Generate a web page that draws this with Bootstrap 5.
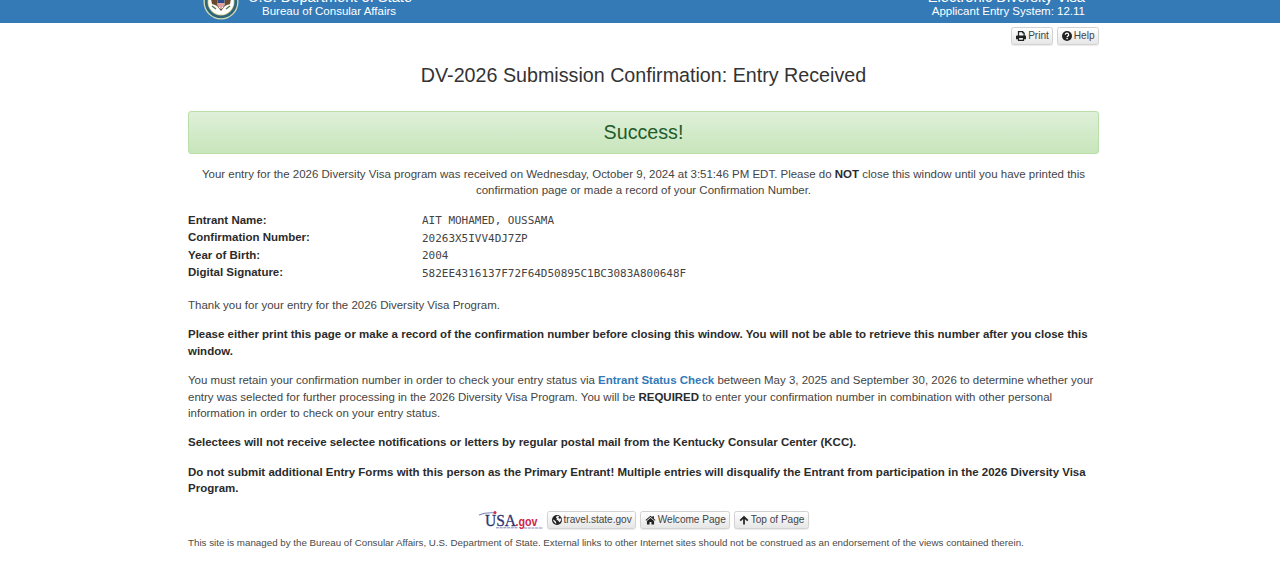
<!DOCTYPE html>
<html lang="en">
<head>
<meta charset="utf-8">
<meta name="viewport" content="width=device-width, initial-scale=1">
<title>DV-2026 Submission Confirmation</title>
<link href="https://cdn.jsdelivr.net/npm/bootstrap@5.3.0/dist/css/bootstrap.min.css" rel="stylesheet">
<style>
body{font-family:"Liberation Sans",Arial,sans-serif;font-size:11.49px;line-height:16.4px;color:#444;background:#fff;overflow:hidden}
b,dt{color:#2b2b2b}
.page{width:911px;margin-left:188px}
.masthead{height:23px;background:#337ab7;color:#fff;overflow:hidden}
.masthead .page{height:23px;padding:0 14px 0 15px}
.seal{width:36px;height:36px;margin-top:-16.5px}
.agency{margin:-11px 0 0 9px}
.system{margin-top:-11px}
.masthead .big{font-size:14.7px;line-height:16px;white-space:nowrap}
.masthead .sub{font-size:11.5px;line-height:13px}
.agency .sub{padding-left:14px}
.btn-tool{--bs-btn-font-size:10.1px;--bs-btn-line-height:16px;--bs-btn-border-radius:2.5px;--bs-btn-border-color:#d2d2d2;--bs-btn-color:#444;height:18px;background:linear-gradient(#fff,#e6e6e6);display:inline-flex;align-items:center;white-space:nowrap;box-shadow:0 1px 1px rgba(0,0,0,.08)}
.btn-tool svg{width:10px;height:10px;fill:#222;flex:none}
h1{font-size:19.7px;line-height:24px;font-weight:400;color:#333;margin:18px 0 23.500px}
.banner{height:43px;border:1px solid #b9dfa8;border-radius:3px;background:linear-gradient(#dff0d8,#c8e5bc);font-size:19.7px;line-height:41px;color:#1f5c2c;margin:0 0 12.500px;padding:0}
p{margin:0 0 13px;white-space:nowrap}
dl{display:grid;grid-template-columns:234px 1fr;line-height:17.4px;margin:0 0 15.5px}
dd{margin:0;font:10.97px/17.4px "DejaVu Sans Mono",monospace;padding-top:.5px;height:17.4px}
a.status{color:#337ab7;font-weight:700;text-decoration:none}
.tools{gap:3.5px}
.tools .btn-tool{padding:0 3.5px 0 4px;gap:2px;letter-spacing:-.02px}
.note{font-size:9.77px;line-height:14px;color:#4a4a4a;margin-top:6px}
</style>
</head>
<body>
<header class="masthead">
  <div class="page d-flex justify-content-between align-items-start">
    <div class="d-flex">
      <svg class="seal" viewBox="0 0 36 36">
        <circle cx="18" cy="18" r="17.5" fill="#d9dcb8"/><circle cx="18" cy="18" r="16.2" fill="#2d6678"/>
        <circle cx="18" cy="18" r="13.4" fill="#d8c98a"/><circle cx="18" cy="18" r="12.6" fill="#fff"/>
        <path d="M8 15q1-4 5-4l3 3q2-4 4 0l3-3q4 0 5 4l-1 5-3 1-2 1-4 5-4-5-2-1-3-1z" fill="#6b4a2c"/>
        <path d="M14.500 16h7v5q-1 3-3.500 4-2.500-1-3.500-4z" fill="#fff"/><path d="M14.500 16h7v3h-7z" fill="#284b8c"/>
        <path d="M16 19v4M18 19v5.500M20 19v4" stroke="#c64545" stroke-width="1"/>
        <path d="M9 22l4 3M27 22l-4 3" stroke="#567b4a" stroke-width="1.500"/>
      </svg>
      <div class="agency"><div class="big">U.S. Department of State</div><div class="sub">Bureau of Consular Affairs</div></div>
    </div>
    <div class="system text-end"><div class="big">Electronic Diversity Visa</div><div class="sub">Applicant Entry System: 12.11</div></div>
  </div>
</header>
<main class="page">
  <div class="d-flex justify-content-end tools" style="padding-top:4px">
    <button class="btn btn-tool" type="button"><svg viewBox="0 0 16 16"><path fill-rule="evenodd" d="M3 0h8l3 3v4h1l1 1v5h-3v3H3v-3H0V8l1-1h2zm2 2v5h7V4h-2V2zm0 9v3h6v-3z"/></svg>Print</button>
    <button class="btn btn-tool" type="button"><svg viewBox="0 0 16 16"><circle cx="8" cy="8" r="8"/><path d="M5.200 6Q5.500 3.500 8 3.500T10.700 6C10.700 8 8.200 7.800 8.200 10" fill="none" stroke="#fff" stroke-width="2"/><path d="M7.100 11h2.200v2.200H7.100z" fill="#fff"/></svg>Help</button>
  </div>
  <h1 class="text-center">DV-2026 Submission Confirmation: Entry Received</h1>
  <div class="alert banner text-center">Success!</div>
  <p class="text-center">Your entry for the 2026 Diversity Visa program was received on Wednesday, October 9, 2024 at 3:51:46 PM EDT. Please do <b>NOT</b> close this window until you have printed this<br>confirmation page or made a record of your Confirmation Number.</p>
  <dl>
    <dt>Entrant Name:</dt><dd>AIT MOHAMED, OUSSAMA</dd>
    <dt>Confirmation Number:</dt><dd>20263X5IVV4DJ7ZP</dd>
    <dt>Year of Birth:</dt><dd>2004</dd>
    <dt>Digital Signature:</dt><dd>582EE4316137F72F64D50895C1BC3083A800648F</dd>
  </dl>
  <p>Thank you for your entry for the 2026 Diversity Visa Program.</p>
  <p><b>Please either print this page or make a record of the confirmation number before closing this window. You will not be able to retrieve this number after you close this<br>window.</b></p>
  <p>You must retain your confirmation number in order to check your entry status via <a class="status" href="#">Entrant Status Check</a> between May 3, 2025 and September 30, 2026 to determine whether your<br>entry was selected for further processing in the 2026 Diversity Visa Program. You will be <b>REQUIRED</b> to enter your confirmation number in combination with other personal<br>information in order to check on your entry status.</p>
  <p><b>Selectees will not receive selectee notifications or letters by regular postal mail from the Kentucky Consular Center (KCC).</b></p>
  <p><b>Do not submit additional Entry Forms with this person as the Primary Entrant! Multiple entries will disqualify the Entrant from participation in the 2026 Diversity Visa<br>Program.</b></p>
  <div class="d-flex justify-content-center align-items-center tools">
    <svg width="65" height="20" viewBox="0 0 65 20">
      <path d="M1 5Q8 2 18 3" fill="none" stroke="#7785b8" stroke-width="1.200"/>
      <text x="7" y="16" font-family="Liberation Serif,serif" font-size="16" fill="#2d3472" stroke="#2d3472" stroke-width=".3" textLength="31" lengthAdjust="spacingAndGlyphs">USA</text>
      <text x="37.500" y="16" font-family="Liberation Sans,sans-serif" font-size="12.500" font-weight="700" fill="#cf2449" textLength="22" lengthAdjust="spacingAndGlyphs">.gov</text>
      <circle cx="17" cy="2.500" r="1.500" fill="#d22b49"/>
      <path d="M18 17.800H40M46 18H65" stroke="#8388b4" stroke-width="1" stroke-dasharray="3 .7"/>
    </svg>
    <a class="btn btn-tool" href="#"><svg viewBox="0 0 16 16"><circle cx="8" cy="8" r="8"/><path d="M8 1l4 1-2 2 2 2 2-1 1 3-3 4-2-3-3-2 1-2-2-1zM2 7l4 3 1 4-2-1-3-4z" fill="#eee"/></svg>travel.state.gov</a>
    <a class="btn btn-tool" href="#"><svg viewBox="0 0 16 16" style="width:11px"><path d="M8 1l3 2.600V2h2.500v3.800L16 8l-1 1.200-7-6-7 6L0 8z"/><path d="M8 4.700l5.700 4.800V15H9.500v-4h-3v4H2.300V9.500z"/></svg>Welcome Page</a>
    <a class="btn btn-tool" href="#"><svg viewBox="0 0 16 16"><path d="M8 1l7 7-2 2-3.600-3.600V15H6.600V6.400L3 10 1 8z"/></svg>Top of Page</a>
  </div>
  <div class="note text-nowrap">This site is managed by the Bureau of Consular Affairs, U.S. Department of State. External links to other Internet sites should not be construed as an endorsement of the views contained therein.</div>
</main>
<script src="https://cdn.jsdelivr.net/npm/bootstrap@5.3.0/dist/js/bootstrap.bundle.min.js"></script>
</body>
</html>
